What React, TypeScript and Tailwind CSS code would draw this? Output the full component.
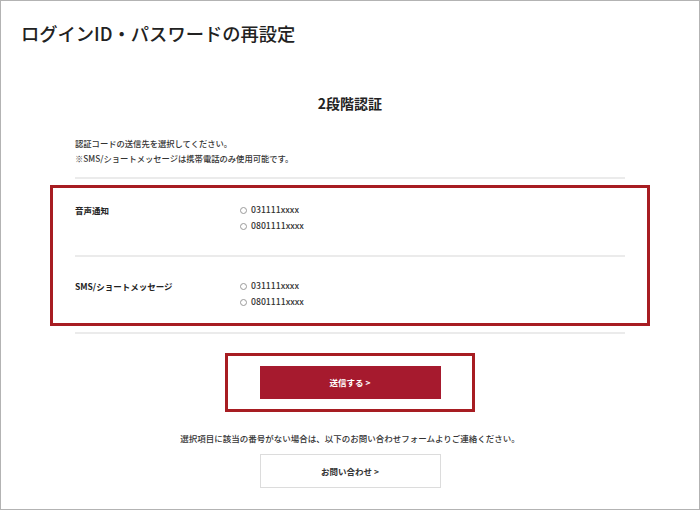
const methods = [
  { label: "音声通知", options: ["031111xxxx", "0801111xxxx"], pad: "pt-[14px] pb-[21px]" },
  { label: "SMS/ショートメッセージ", options: ["031111xxxx", "0801111xxxx"], pad: "pt-[21px] pb-[13px]" },
];

const Radio = ({ text }: { text: string }) => (
  <label className="flex items-center h-[16px] gap-[4px]">
    <span className="w-[7px] h-[7px] rounded-full border border-[#9a9a9a] bg-white" />
    <span className="text-[8.7px] font-medium text-[#333]">{text}</span>
  </label>
);

export default function App() {
  return (
    <div className="w-[700px] h-[510px] bg-white border border-[#b3b3b3] font-['Noto_Sans_CJK_JP',sans-serif] text-[#222]">
      <h1 className="pl-[20px] pt-[19px] text-[18.3px] leading-[26px] font-medium">
        ログインID・パスワードの再設定
      </h1>
      <h2 className="mt-[47px] text-center text-[14px] leading-[20px] font-bold">2段階認証</h2>

      <div className="mx-[74px] mt-[23px] text-[8.3px] leading-[15px] text-[#333] font-medium">
        <p>認証コードの送信先を選択してください。</p>
        <p>※SMS/ショートメッセージは携帯電話のみ使用可能です。</p>
      </div>
      <div className="mx-[74px] mt-[11px] h-[2px] bg-[#ebebeb]" />

      <div className="mx-[49px] mt-[6px] border-[3px] border-[#a71d22] px-[22px]">
        {methods.map((m, i) => (
          <div key={m.label}>
            {i > 0 && <div className="h-[2px] bg-[#ebebeb]" />}
            <div className={`flex ${m.pad}`}>
              <div className="w-[165px] text-[8.5px] leading-[16px] font-bold">{m.label}</div>
              <div className="flex flex-col">
                {m.options.map((o) => (
                  <Radio key={o} text={o} />
                ))}
              </div>
            </div>
          </div>
        ))}
      </div>
      <div className="mx-[74px] mt-[6px] h-[2px] bg-[#ebebeb]" />

      <div className="mx-auto mt-[19px] w-[250px] border-[3px] border-[#a71d22] py-[10px] flex justify-center">
        <button className="w-[181px] h-[33px] bg-[#a61a2e] text-white text-[8.5px] font-bold">
          送信する &gt;
        </button>
      </div>

      <p className="mt-[18px] text-center text-[8.5px] leading-[16px] text-[#333] font-medium">
        選択項目に該当の番号がない場合は、以下のお問い合わせフォームよりご連絡ください。
      </p>
      <div className="mt-[8px] flex justify-center">
        <button className="w-[181px] h-[34px] border border-[#dcdcdc] bg-white text-[8.5px] font-bold text-[#333]">
          お問い合わせ &gt;
        </button>
      </div>
    </div>
  );
}
